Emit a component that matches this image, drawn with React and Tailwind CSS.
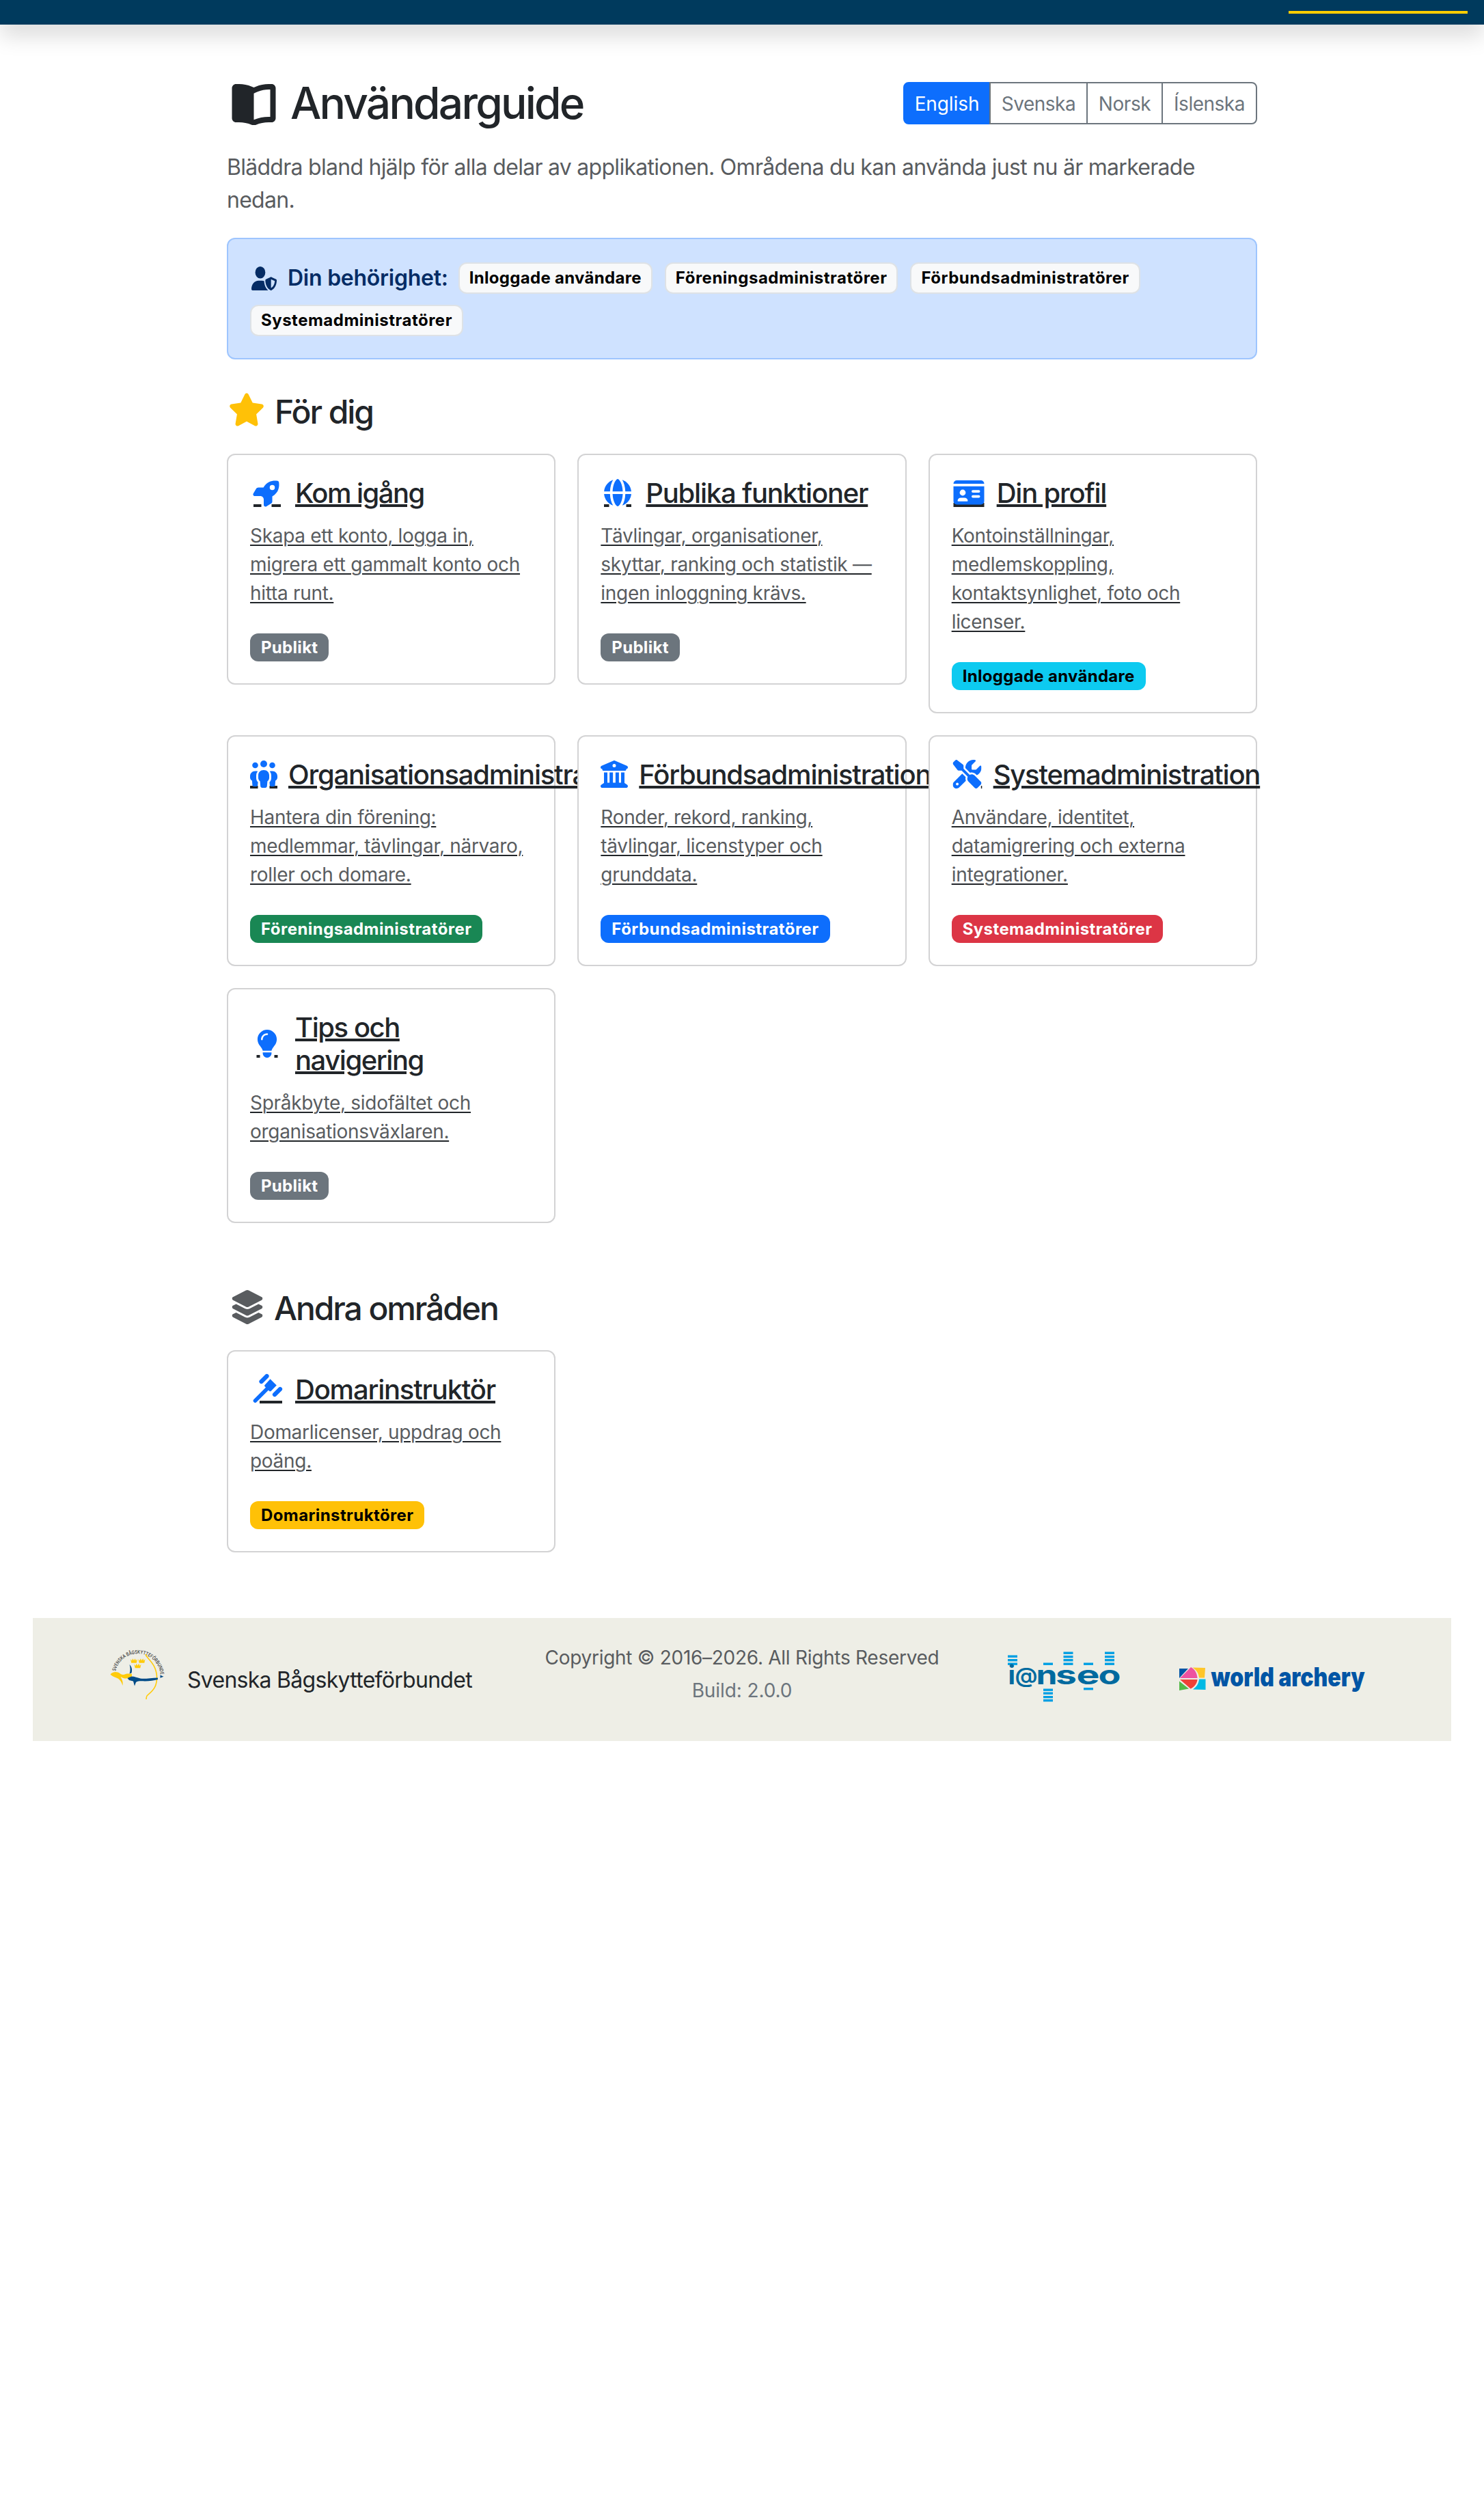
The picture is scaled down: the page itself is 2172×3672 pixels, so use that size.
import React from "react";
import {
  FaUserShield,
  FaStar,
  FaBuildingColumns,
  FaScrewdriverWrench,
  FaLightbulb,
  FaLayerGroup,
} from "react-icons/fa6";

const INK = "#212529";

/* Icons sit in a 48px-high line; dark rects are the underline segments beside each glyph. */
function IconBox({ width = 50, children }) {
  return (
    <svg
      className="shrink-0 overflow-visible text-[#0d6efd]"
      width={width}
      height="48"
      viewBox={`0 0 ${width} 48`}
      fill="currentColor"
    >
      {children}
    </svg>
  );
}

function Rocket() {
  return (
    <IconBox>
      <rect x="5" y="40" width="11.5" height="4" fill={INK} />
      <rect x="31.5" y="40" width="13.5" height="4" fill={INK} />
      <g transform="translate(5 3) scale(0.078125)">
        <path d="M128 320L24.5 320c-24.9 0-40.2-27.1-27.4-48.5L50 183.3C58.7 168.8 74.3 160 91.2 160l95 0c76.1-128.9 189.6-135.4 265.5-124.3 12.8 1.9 22.8 11.9 24.6 24.6 11.1 75.9 4.6 189.4-124.3 265.5l0 95c0 16.9-8.8 32.5-23.3 41.2l-88.2 52.9c-21.3 12.8-48.5-2.6-48.5-27.4L192 384c0-35.3-28.7-64-64-64l-.1 0zM400 160a48 48 0 1 0-96 0 48 48 0 1 0 96 0z" />
      </g>
    </IconBox>
  );
}

function Globe() {
  return (
    <IconBox>
      <rect x="5" y="40" width="7.5" height="4" fill={INK} />
      <rect x="37.5" y="40" width="7.5" height="4" fill={INK} />
      <g transform="translate(5 3) scale(0.078125)">
        <path d="M351.9 280l-190.9 0c2.9 64.5 17.2 123.9 37.5 167.4 11.4 24.5 23.7 41.8 35.1 52.4 11.2 10.5 18.9 12.2 22.9 12.2s11.7-1.7 22.9-12.2c11.4-10.6 23.7-28 35.1-52.4 20.3-43.5 34.6-102.9 37.5-167.4zM160.9 232l190.9 0C349 167.5 334.7 108.1 314.4 64.6 303 40.2 290.7 22.8 279.3 12.2 268.1 1.7 260.4 0 256.4 0s-11.7 1.7-22.9 12.2c-11.4 10.6-23.7 28-35.1 52.4-20.3 43.5-34.6 102.9-37.5 167.4zm-48 0C116.4 146.4 138.5 66.9 170.8 14.7 78.7 47.3 10.9 131.2 1.5 232l111.4 0zM1.5 280c9.4 100.8 77.2 184.7 169.3 217.3-32.3-52.2-54.4-131.7-57.9-217.3L1.5 280zm398.4 0c-3.5 85.6-25.6 165.1-57.9 217.3 92.1-32.7 159.9-116.5 169.3-217.3l-111.4 0zm111.4-48C501.9 131.2 434.1 47.3 342 14.7 374.3 66.9 396.4 146.4 399.9 232l111.4 0z" />
      </g>
    </IconBox>
  );
}

function IdCard() {
  return (
    <IconBox>
      <rect x="2.5" y="38" width="45" height="6" fill={INK} />
      <path d="M7.5 5h35a5 5 0 0 1 5 5H2.5a5 5 0 0 1 5-5z" />
      <path d="M2.5 13.8h45v21.7a5 5 0 0 1-5 5h-35a5 5 0 0 1-5-5z" />
      <circle cx="16" cy="23" r="4.4" fill="#fff" />
      <path d="M8.5 35a5 5 0 0 1 5-4.5h5a5 5 0 0 1 5 4.500q0 .7-.9.700H9.400q-.9 0-.9-.700z" fill="#fff" />
      <rect x="29" y="19.2" width="12.5" height="3.8" rx="1.900" fill="#fff" />
      <rect x="29" y="26.7" width="12.5" height="3.8" rx="1.900" fill="#fff" />
    </IconBox>
  );
}

function People() {
  return (
    <IconBox width={40}>
      <rect x="0" y="40" width="11.5" height="4" fill={INK} />
      <rect x="28.5" y="40" width="11.5" height="4" fill={INK} />
      <circle cx="7.5" cy="10" r="4.3" />
      <circle cx="20" cy="8" r="5" />
      <circle cx="32.5" cy="10" r="4.3" />
      <path d="M20 17c4.800 0 8 3.300 8 7.800v3.700c0 2.200-1.100 3.800-2.600 4.900l-.6 7.100c-.1 1.500-1.200 2.500-2.600 2.500h-4.400c-1.400 0-2.500-1-2.600-2.500l-.6-7.100C13.100 32.300 12 30.700 12 28.500v-3.700C12 20.300 15.200 17 20 17z" />
      <path d="M11.200 18.700A10.500 10.500 0 0 0 9 25v3.500c0 2.600.9 4.600 2.600 6.200l-.4 4.400c-.1 1.100-1 1.900-2.100 1.900H5.600c-1.200 0-2.100-.8-2.200-2l-.5-6.400C1.100 31.500 0 30 0 27.800V26c0-4.300 3.200-7.600 7.500-7.600 1.400 0 2.700.1 3.700.300z" />
      <path d="M28.800 18.700A10.500 10.500 0 0 1 31 25v3.500c0 2.600-.9 4.600-2.600 6.200l.4 4.400c.1 1.100 1 1.900 2.100 1.900h3.500c1.200 0 2.100-.8 2.200-2l.5-6.400c1.800-1.100 2.900-2.600 2.900-4.800V26c0-4.300-3.200-7.600-7.500-7.600-1.400 0-2.700.1-3.700.300z" />
    </IconBox>
  );
}

function Columns() {
  return (
    <IconBox width={40}>
      <FaBuildingColumns x="0" y="3" size={40} />
    </IconBox>
  );
}

function Tools() {
  return (
    <IconBox width={45}>
      <rect x="42.8" y="40" width="1.5" height="4" fill={INK} />
      <FaScrewdriverWrench x="1.5" y="2" size={42} />
    </IconBox>
  );
}

function Bulb() {
  return (
    <IconBox>
      <rect x="9.5" y="40" width="5" height="4" fill={INK} />
      <rect x="35.5" y="40" width="5" height="4" fill={INK} />
      <FaLightbulb x="4.5" y="3" size={41} />
    </IconBox>
  );
}

function Gavel() {
  return (
    <IconBox>
      <rect x="14" y="40" width="33" height="4" fill={INK} />
      <g stroke="currentColor" strokeLinecap="round" fill="none">
        <path d="M16.500 12L24.500 4" strokeWidth="6.200" />
        <path d="M36 31L44 23" strokeWidth="6.200" />
        <path d="M7.500 40L27 20.500" strokeWidth="5.600" />
      </g>
      <path d="M29.500 8.300L38.800 17.600L30.500 25.900Q29.300 26.800 28.100 25.700L21.700 19.300Q20.600 18.100 21.500 16.900z" />
    </IconBox>
  );
}

function Card({ icon, title, titleClass = "tracking-[-1.22px]", lines, badge, badgeClass }) {
  return (
    <a className="relative block self-start rounded-xl border-2 border-[#d3d3d4] bg-white p-8 text-[#212529]">
      <h3 className="mb-4 flex items-center gap-4 text-[40px] leading-[48px] font-medium">
        {icon}
        <span
          className={`whitespace-nowrap underline decoration-[4px] underline-offset-[2px] ${titleClass}`}
        >
          {title.map((t, i) => (
            <span key={t}>
              {i > 0 && <br />}
              {t}
            </span>
          ))}
        </span>
      </h3>
      <p className="mb-[37.5px] pt-px text-[28px] leading-[42px] tracking-[-0.3px] whitespace-nowrap underline decoration-[#212529] decoration-2 underline-offset-[3px]">
        {lines.map((t, i) => (
          <span key={t} className="text-[#595c5f]">
            {i > 0 && <br />}
            {t}
          </span>
        ))}
      </p>
      <div className="flex">
        <span
          className={`rounded-xl px-4 text-[24px] leading-[41.5px] font-bold ${badgeClass}`}
        >
          {badge}
        </span>
      </div>
    </a>
  );
}

const GRAY = "bg-[#6c757d] text-white tracking-[0.3px]";

function FederationLogo() {
  const crown = "M0 0l2 2.600L3.300-.800 5 2.200 6.700-.800 8 2.600 10 0 8.800 5.800H1.200z";
  return (
    <svg width="80" height="78" viewBox="0 0 80 78" className="overflow-visible">
      <defs>
        <path id="ring" d="M8 35A33.500 33.500 0 0 1 74 40" />
      </defs>
      <text fontFamily="Inter" fontSize="7.200" fontWeight="500" fill="#333">
        <textPath href="#ring" textLength="98" lengthAdjust="spacingAndGlyphs">
          SVENSKA BÅGSKYTTEFÖRBUNDET
        </textPath>
      </text>
      <g fill="#ffcb0b">
        <path transform="translate(30 17)" d={crown} />
        <path transform="translate(41.500 17)" d={crown} />
        <path transform="translate(35.500 24.500)" d={crown} />
        <path d="M.6 39.500C3 36 10 34.500 15 38.500c2.500 2 5 1.500 8 .5 3-1 6 0 8.500-.5.8 1 .8 3 0 4.500-3 1-6 3-10 2.500-2.500-.5-4-1.500-6-2.500 1.500 3.500 4 6 3 13-1-3-2-6-5-9-3.500-3.500-10-3.500-12.900-7.500z" />
      </g>
      <path d="M52 10C53 16 67 22 68.500 42 69.500 60 60 65 54 71Q53 73 53 76" fill="none" stroke="#ffcb0b" strokeWidth="1.600" />
      <g fill="#004b87">
        <path d="M28.500 25c3 3 4.500 7 3 12.500l-3 1c1.500-4 1.500-9 0-13.500z" />
        <path d="M25.500 45l6-2.500c5 0 8 2 13 3s15-.5 25.500-1v2.500c-6 1.500-12 2.500-19 2.500-4 0-9-1-13 1.500l-2 5.500-2-7-6-1.500z" />
        <path d="M73.500 40.500l5 2.200-5 2z" />
      </g>
    </svg>
  );
}

function IanseoLogo() {
  const bars = [
    [0, 5.5], [0, 11], [0, 16.5],
    [52, 16.5],
    [81.5, 0.5], [81.5, 6], [81.5, 11], [81.5, 16.5],
    [111, 16.5],
    [142, 0.5], [142, 6], [142, 11], [142, 16.5],
    [52, 54.5], [52, 59.5], [52, 65], [52, 70],
    [111, 53],
  ];
  const glyphs = [
    ["i", 0.5, 10.5], ["@", 10.5, 33], ["n", 41.5, 31], ["s", 70, 31], ["e", 100.5, 34], ["o", 132.5, 33],
  ];
  return (
    <svg width="164" height="74" viewBox="0 0 164 74" className="overflow-visible">
      {bars.map(([x, y], i) => (
        <rect key={i} x={x} y={y} width="14" height="3.4" fill="#009fe3" />
      ))}
      <g fontFamily="Inter" fill="#006a9f">
        {glyphs.map(([g, x, w]) => (
          <text
            key={g}
            x={x}
            y={g === "@" ? 46 : 47.5}
            fontSize={g === "@" ? 31 : 39}
            fontWeight={g === "@" ? 600 : 700}
            textLength={w}
            lengthAdjust="spacingAndGlyphs"
          >
            {g}
          </text>
        ))}
      </g>
    </svg>
  );
}

function WorldArcheryLogo() {
  return (
    <svg width="271" height="35" viewBox="0 0 271 35" className="overflow-visible">
      <path d="M0 2H13L0 16z" fill="#0055a5" />
      <path d="M1 16L17 0C23 3 26 9 26.500 16z" fill="#ee52a0" />
      <path d="M19.500.5L38 1 37 15.500H29C28.500 9 25 4 19.500.5z" fill="#ffc629" />
      <path d="M0 20.500L14 31.500Q7 32.500 0 34z" fill="#54b948" />
      <path d="M1 18H26.500C26 24 22 29 16.500 31.500z" fill="#f04137" />
      <path d="M29 17.500H38.500V33L20 32.500C25 29 28.500 24 29 17.500z" fill="#00b9e4" />
      <text
        x="46.5"
        y="27.5"
        fontFamily="Inter"
        fontSize="38"
        fontWeight="900"
        fill="#0055a5"
        textLength="225"
        lengthAdjust="spacingAndGlyphs"
      >
        world archery
      </text>
    </svg>
  );
}

const LANGS = [
  ["English", "w-[128px] rounded-l-lg border-[#0d6efd] bg-[#0d6efd] text-white tracking-[-0.1px]"],
  ["Svenska", "w-[144px] -ml-[2px] border-[#6c757d] text-[#6c757d] tracking-[-0.5px]"],
  ["Norsk", "w-[112px] -ml-[2px] border-[#6c757d] text-[#6c757d] tracking-[-0.4px]"],
  ["Íslenska", "w-[140px] -ml-[2px] rounded-r-lg border-[#6c757d] text-[#6c757d] tracking-[-0.5px]"],
];

const RIGHTS = [
  ["Inloggade användare", "tracking-[0.3px]"],
  ["Föreningsadministratörer", "tracking-[0.5px]"],
  ["Förbundsadministratörer", "tracking-[0.5px]"],
  ["Systemadministratörer", "tracking-[0.5px]"],
];

export default function App() {
  return (
    <div className="min-h-[3672px] bg-white font-['Inter',sans-serif] text-[#212529]">
      <header className="flex h-9 justify-end bg-[#003a5d] pt-4 pr-6 shadow-[0_16px_32px_rgba(0,0,0,0.15)]">
        <div className="h-1 w-[262px] bg-[#ffcd00]" />
      </header>

      <main className="mx-auto w-[1508px] pt-[76px]">
        <div className="flex items-start justify-between">
          <h1 className="flex h-[77px] items-center text-[64px] leading-[77px] font-medium tracking-[-2.8px]">
            <svg width="80" height="64" viewBox="-60 0 640 512" fill="currentColor" className="mr-[13px]">
              <path d="M256 141.300l0 309.300 .5-.2C311.100 427.700 369.700 416 428.800 416l19.200 0 0-320-19.200 0c-42.200 0-84.100 8.400-123.100 24.600-16.800 7-33.400 13.900-49.700 20.700zM230.900 61.500L256 72 281.100 61.500C327.900 42 378.100 32 428.800 32L464 32c26.500 0 48 21.500 48 48l0 352c0 26.500-21.500 48-48 48l-35.200 0c-50.700 0-100.900 10-147.700 29.500l-12.800 5.300c-7.900 3.300-16.700 3.300-24.600 0l-12.800-5.300C184.100 490 133.900 480 83.200 480L48 480c-26.500 0-48-21.500-48-48L0 80C0 53.500 21.500 32 48 32l35.200 0c50.700 0 100.900 10 147.700 29.500z" />
            </svg>
            Användarguide
          </h1>
          <div className="mt-2 flex h-[62px]">
            {LANGS.map(([name, cls]) => (
              <button
                key={name}
                className={`flex items-center justify-center border-2 pt-[2px] text-[28px] leading-[42px] ${cls}`}
              >
                {name}
              </button>
            ))}
          </div>
        </div>

        <p className="mt-8 text-[32px] leading-[48px] tracking-[-0.72px] text-[#595c5f]">
          Bläddra bland hjälp för alla delar av applikationen. Områdena du kan använda just nu är markerade
          <br />
          nedan.
        </p>

        <section className="mt-[31px] flex h-[178px] flex-wrap content-start items-center gap-x-[18px] gap-y-4 rounded-xl border-2 border-[#9ec5fe] bg-[#cfe2ff] px-8 pt-[34px]">
          <strong className="-mr-[3px] flex h-[46px] items-center text-[32px] font-semibold tracking-[-0.25px] text-[#052c65]">
            <FaUserShield
              preserveAspectRatio="none"
              className="mr-[16px] ml-[2px] h-[35px] w-[37px]"
            />
            Din behörighet:
          </strong>
          {RIGHTS.map(([name, cls]) => (
            <span
              key={name}
              className={`h-[46px] rounded-xl border-2 border-[#dee2e6] bg-[#f8f9fa] px-[14px] text-[24px] leading-[41px] font-bold text-black ${cls}`}
            >
              {name}
            </span>
          ))}
        </section>

        <h2 className="mt-12 mb-8 flex h-[58px] items-center text-[48px] leading-[58px] font-medium tracking-[-2.05px]">
          <FaStar className="mr-[14px] mb-[7px] ml-[2px] h-[49px] w-[54px] shrink-0 text-[#ffc107]" />
          <span>För dig</span>
        </h2>

        <div className="grid grid-cols-3 gap-8">
          <Card
            icon={<Rocket />}
            title={["Kom igång"]}
            titleClass="tracking-[-1.55px]"
            lines={["Skapa ett konto, logga in,", "migrera ett gammalt konto och", "hitta runt."]}
            badge="Publikt"
            badgeClass={GRAY}
          />
          <Card
            icon={<Globe />}
            title={["Publika funktioner"]}
            lines={["Tävlingar, organisationer,", "skyttar, ranking och statistik —", "ingen inloggning krävs."]}
            badge="Publikt"
            badgeClass={GRAY}
          />
          <Card
            icon={<IdCard />}
            title={["Din profil"]}
            lines={["Kontoinställningar,", "medlemskoppling,", "kontaktsynlighet, foto och", "licenser."]}
            badge="Inloggade användare"
            badgeClass="bg-[#0dcaf0] text-black tracking-[0.3px]"
          />
          <Card
            icon={<People />}
            title={["Organisationsadministration"]}
            lines={["Hantera din förening:", "medlemmar, tävlingar, närvaro,", "roller och domare."]}
            badge="Föreningsadministratörer"
            badgeClass="bg-[#198754] text-white tracking-[0.45px]"
          />
          <Card
            icon={<Columns />}
            title={["Förbundsadministration"]}
            lines={["Ronder, rekord, ranking,", "tävlingar, licenstyper och", "grunddata."]}
            badge="Förbundsadministratörer"
            badgeClass="bg-[#0d6efd] text-white tracking-[0.45px]"
          />
          <Card
            icon={<Tools />}
            title={["Systemadministration"]}
            lines={["Användare, identitet,", "datamigrering och externa", "integrationer."]}
            badge="Systemadministratörer"
            badgeClass="bg-[#dc3545] text-white tracking-[0.4px]"
          />
          <Card
            icon={<Bulb />}
            title={["Tips och", "navigering"]}
            titleClass="tracking-[-1.45px]"
            lines={["Språkbyte, sidofältet och", "organisationsväxlaren."]}
            badge="Publikt"
            badgeClass={GRAY}
          />
        </div>

        <h2 className="mt-24 mb-8 flex h-[58px] items-center text-[48px] leading-[58px] font-medium tracking-[-2.1px]">
          <FaLayerGroup
            preserveAspectRatio="none"
            className="mr-[14px] mb-[5px] ml-[5px] h-[50px] w-[50px] shrink-0 text-[#595c5f]"
          />
          <span>Andra områden</span>
        </h2>

        <div className="grid grid-cols-3 gap-8">
          <Card
            icon={<Gavel />}
            title={["Domarinstruktör"]}
            lines={["Domarlicenser, uppdrag och", "poäng."]}
            badge="Domarinstruktörer"
            badgeClass="bg-[#ffc107] text-black tracking-[0.4px]"
          />
        </div>
      </main>

      <footer className="mx-12 mt-24 flex h-[180px] items-start bg-[#eeeee6]">
        <div className="flex w-[692px] items-start pt-[43px] pl-[113px]">
          <FederationLogo />
          <span className="mt-6 ml-[33px] text-[32px] leading-[48px] tracking-[-0.72px] whitespace-nowrap">
            Svenska Bågskytteförbundet
          </span>
        </div>
        <div className="w-[692px] pt-[37px] text-center text-[28px] leading-[42px] tracking-[-0.28px] text-[#595c5f]">
          Copyright © 2016–2026. All Rights Reserved
          <div className="mt-[6px] tracking-[-0.1px] text-[#6c757d]">Build: 2.0.0</div>
        </div>
        <div className="flex items-start pt-[49px] pl-[43px]">
          <IanseoLogo />
          <div className="mt-[23px] ml-[87px]">
            <WorldArcheryLogo />
          </div>
        </div>
      </footer>
    </div>
  );
}
